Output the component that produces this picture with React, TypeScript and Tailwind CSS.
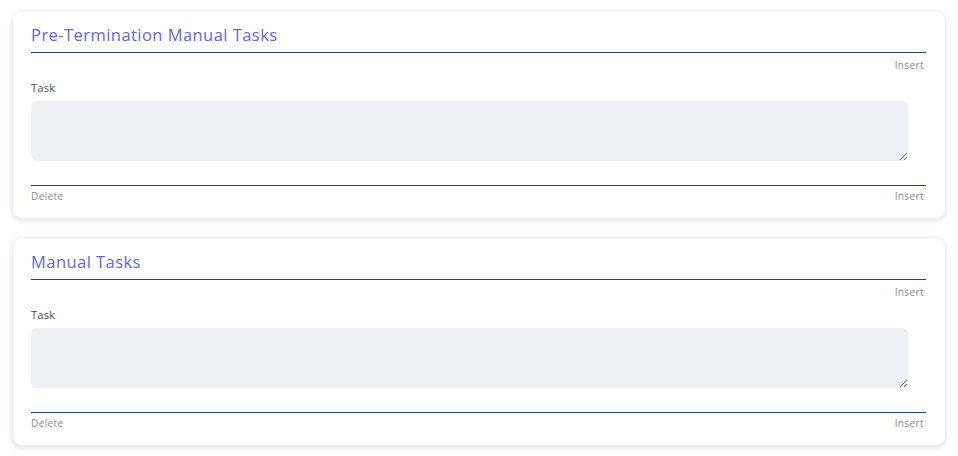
function TaskSection({ title }: { title: string }) {
  return (
    <div className="rounded-[10px] border border-[#eceff5] bg-white pl-[18px] pr-[19px] pt-[12px] pb-[15px] shadow-[0_2px_5px_rgba(0,0,0,0.12)]">
      <div className="border-b border-[#23476f] pb-[5px]">
        <h2 className="text-[16.5px] leading-[24px] tracking-[0.45px] text-[#6464f2]">{title}</h2>
      </div>
      <div className="mt-[5px] flex justify-end pr-[2px]">
        <button className="text-[10px] leading-[14px] tracking-[0.4px] text-[#858b96]">Insert</button>
      </div>
      <label className="mt-[8px] block text-[11px] font-medium leading-[16px] tracking-[0.3px] text-[#4a5260]">
        Task
      </label>
      <textarea className="mt-[5px] block h-[60px] w-[877px] rounded-[6px] bg-[#edf1f5] outline-none" />
      <div className="mt-[24px] flex justify-between border-t border-[#23476f] pt-[3px] pr-[2px]">
        <button className="text-[10px] leading-[14px] tracking-[0.4px] text-[#858b96]">Delete</button>
        <button className="text-[10px] leading-[14px] tracking-[0.4px] text-[#858b96]">Insert</button>
      </div>
    </div>
  );
}

export default function App() {
  return (
    <div
      className="flex min-h-screen flex-col gap-[18px] bg-white pl-[12px] pr-[12px] pt-[10px]"
      style={{ fontFamily: '"Open Sans", "Noto Sans", sans-serif' }}
    >
      <TaskSection title="Pre-Termination Manual Tasks" />
      <TaskSection title="Manual Tasks" />
    </div>
  );
}
